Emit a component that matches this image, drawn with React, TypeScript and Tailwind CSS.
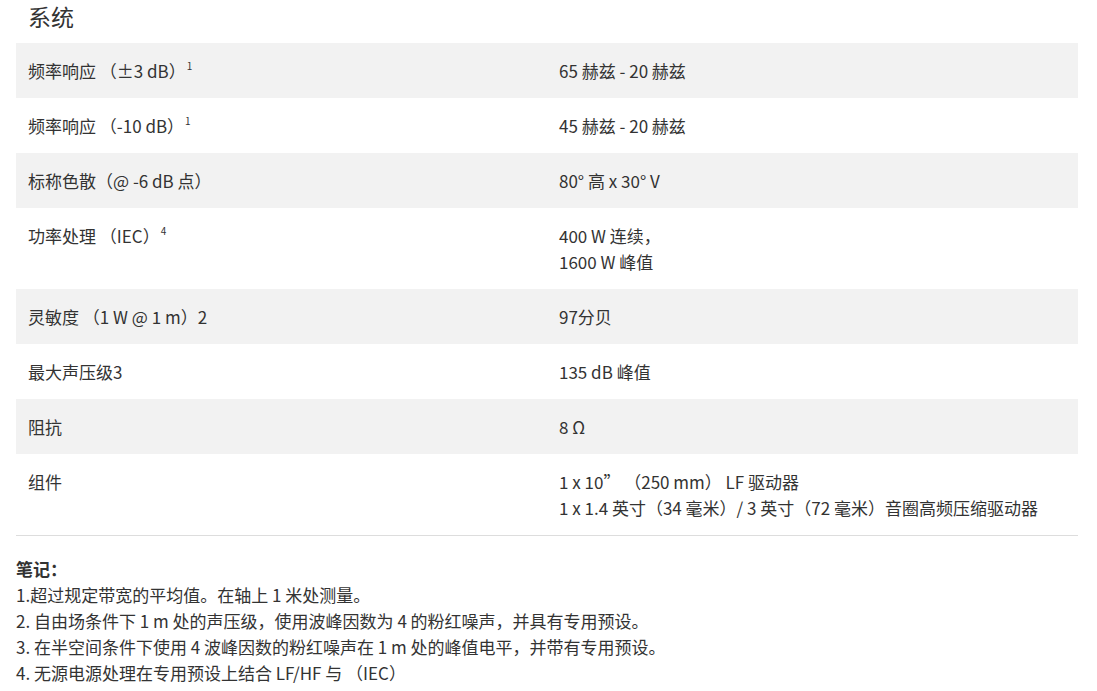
import React from "react";

type Row = { label: React.ReactNode; value: React.ReactNode[] };

const Sup = ({ children }: { children: React.ReactNode }) => (
  <span className="ml-[1px] align-top text-[10px] leading-[16px]">{children}</span>
);

const rows: Row[] = [
  { label: <>频率响应 （±3 dB）<Sup>1</Sup></>, value: ["65 赫兹 - 20 赫兹"] },
  { label: <>频率响应 （-10 dB）<Sup>1</Sup></>, value: ["45 赫兹 - 20 赫兹"] },
  { label: <>标称色散（@ -6 dB 点）</>, value: ["80° 高 x 30° V"] },
  { label: <>功率处理 （IEC）<Sup>4</Sup></>, value: ["400 W 连续，", "1600 W 峰值"] },
  { label: <>灵敏度 （1 W @ 1 m）2</>, value: ["97分贝"] },
  { label: <>最大声压级3</>, value: ["135 dB 峰值"] },
  { label: <>阻抗</>, value: ["8 Ω"] },
  {
    label: <>组件</>,
    value: ["1 x 10” （250 mm） LF 驱动器", "1 x 1.4 英寸（34 毫米）/ 3 英寸（72 毫米）音圈高频压缩驱动器"],
  },
];

const notes = [
  "1.超过规定带宽的平均值。在轴上 1 米处测量。",
  "2. 自由场条件下 1 m 处的声压级，使用波峰因数为 4 的粉红噪声，并具有专用预设。",
  "3. 在半空间条件下使用 4 波峰因数的粉红噪声在 1 m 处的峰值电平，并带有专用预设。",
  "4. 无源电源处理在专用预设上结合 LF/HF 与 （IEC）",
];

export default function App() {
  return (
    <div
      className="min-h-[691px] w-[1097px] bg-white text-[#333333]"
      style={{ fontFamily: '"Noto Sans CJK SC", "Noto Sans", sans-serif' }}
    >
      <div className="pl-[28px] text-[23px] leading-[32px]">系统</div>
      <div className="ml-[16px] mr-[19px] mt-[11px] border-b border-[#dddddd]">
        {rows.map((r, i) => (
          <div
            key={i}
            className={`grid grid-cols-2 text-[17px] leading-[26px] ${i % 2 === 0 ? "bg-[#f2f2f2]" : "bg-white"}`}
          >
            <div className="px-[12px] py-[14.5px]">{r.label}</div>
            <div className="px-[12px] py-[14.5px]">
              {r.value.map((v, j) => (
                <div key={j}>{v}</div>
              ))}
            </div>
          </div>
        ))}
      </div>
      <div className="px-[16px] pt-[20px] text-[17px] leading-[26px]">
        <div className="font-bold">笔记：</div>
        {notes.map((n, i) => (
          <div key={i}>{n}</div>
        ))}
      </div>
    </div>
  );
}
